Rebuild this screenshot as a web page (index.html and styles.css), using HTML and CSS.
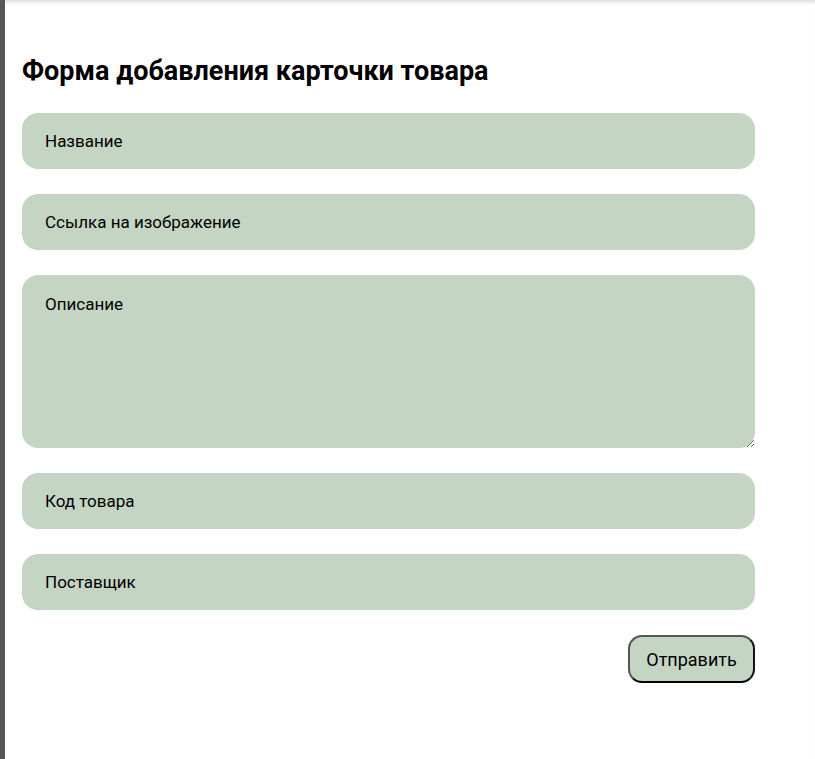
FILE: index.html
```html
<!DOCTYPE html>
<html lang="ru">
<head>
<meta charset="utf-8">
<title>Форма добавления карточки товара</title>
<link rel="stylesheet" href="styles.css">
</head>
<body>
<div class="edge"></div>
<main class="panel">
  <h1 class="title">Форма добавления карточки товара</h1>
  <form class="form">
    <input class="field" type="text" placeholder="Название">
    <input class="field" type="text" placeholder="Ссылка на изображение">
    <textarea class="field area" placeholder="Описание"></textarea>
    <input class="field" type="text" placeholder="Код товара">
    <input class="field" type="text" placeholder="Поставщик">
    <div class="actions">
      <button class="submit" type="submit">Отправить</button>
    </div>
  </form>
</main>
</body>
</html>
```
FILE: styles.css
```css
html, body {
  margin: 0;
  height: 100%;
}
body {
  display: flex;
  background: #fff;
  font-family: Roboto, "Noto Sans", sans-serif;
  color: #000;
}
.edge {
  width: 5px;
  flex: none;
  background: #56575a;
}
.panel {
  flex: 1;
  padding: 55px 0 0 17px;
  box-shadow: inset 0 5px 4px -3px rgba(0, 0, 0, 0.14);
}
.title {
  margin: 0 0 26px;
  font-size: 27px;
  line-height: 32px;
  font-weight: 700;
}
.form {
  width: 733px;
  display: flex;
  flex-direction: column;
  gap: 25px;
}
.field {
  box-sizing: border-box;
  width: 100%;
  height: 56px;
  margin: 0;
  border: none;
  border-radius: 16px;
  background: #c5d5c3;
  padding: 0 23px;
  font-family: Roboto, "Noto Sans", sans-serif;
  font-size: 17px;
  color: #000;
  outline: none;
}
.field::placeholder {
  color: #000;
  opacity: 1;
}
.area {
  height: 173px;
  padding: 19px 23px;
  line-height: 20px;
  resize: vertical;
}
.actions {
  display: flex;
  justify-content: flex-end;
}
.submit {
  box-sizing: border-box;
  width: 127px;
  height: 48px;
  border-radius: 14px;
  border: 2px solid;
  border-color: #555 #111 #000 #555;
  background: #c5d5c3;
  font-family: Roboto, "Noto Sans", sans-serif;
  font-size: 18px;
  color: #000;
  padding: 0;
  cursor: pointer;
}
```
